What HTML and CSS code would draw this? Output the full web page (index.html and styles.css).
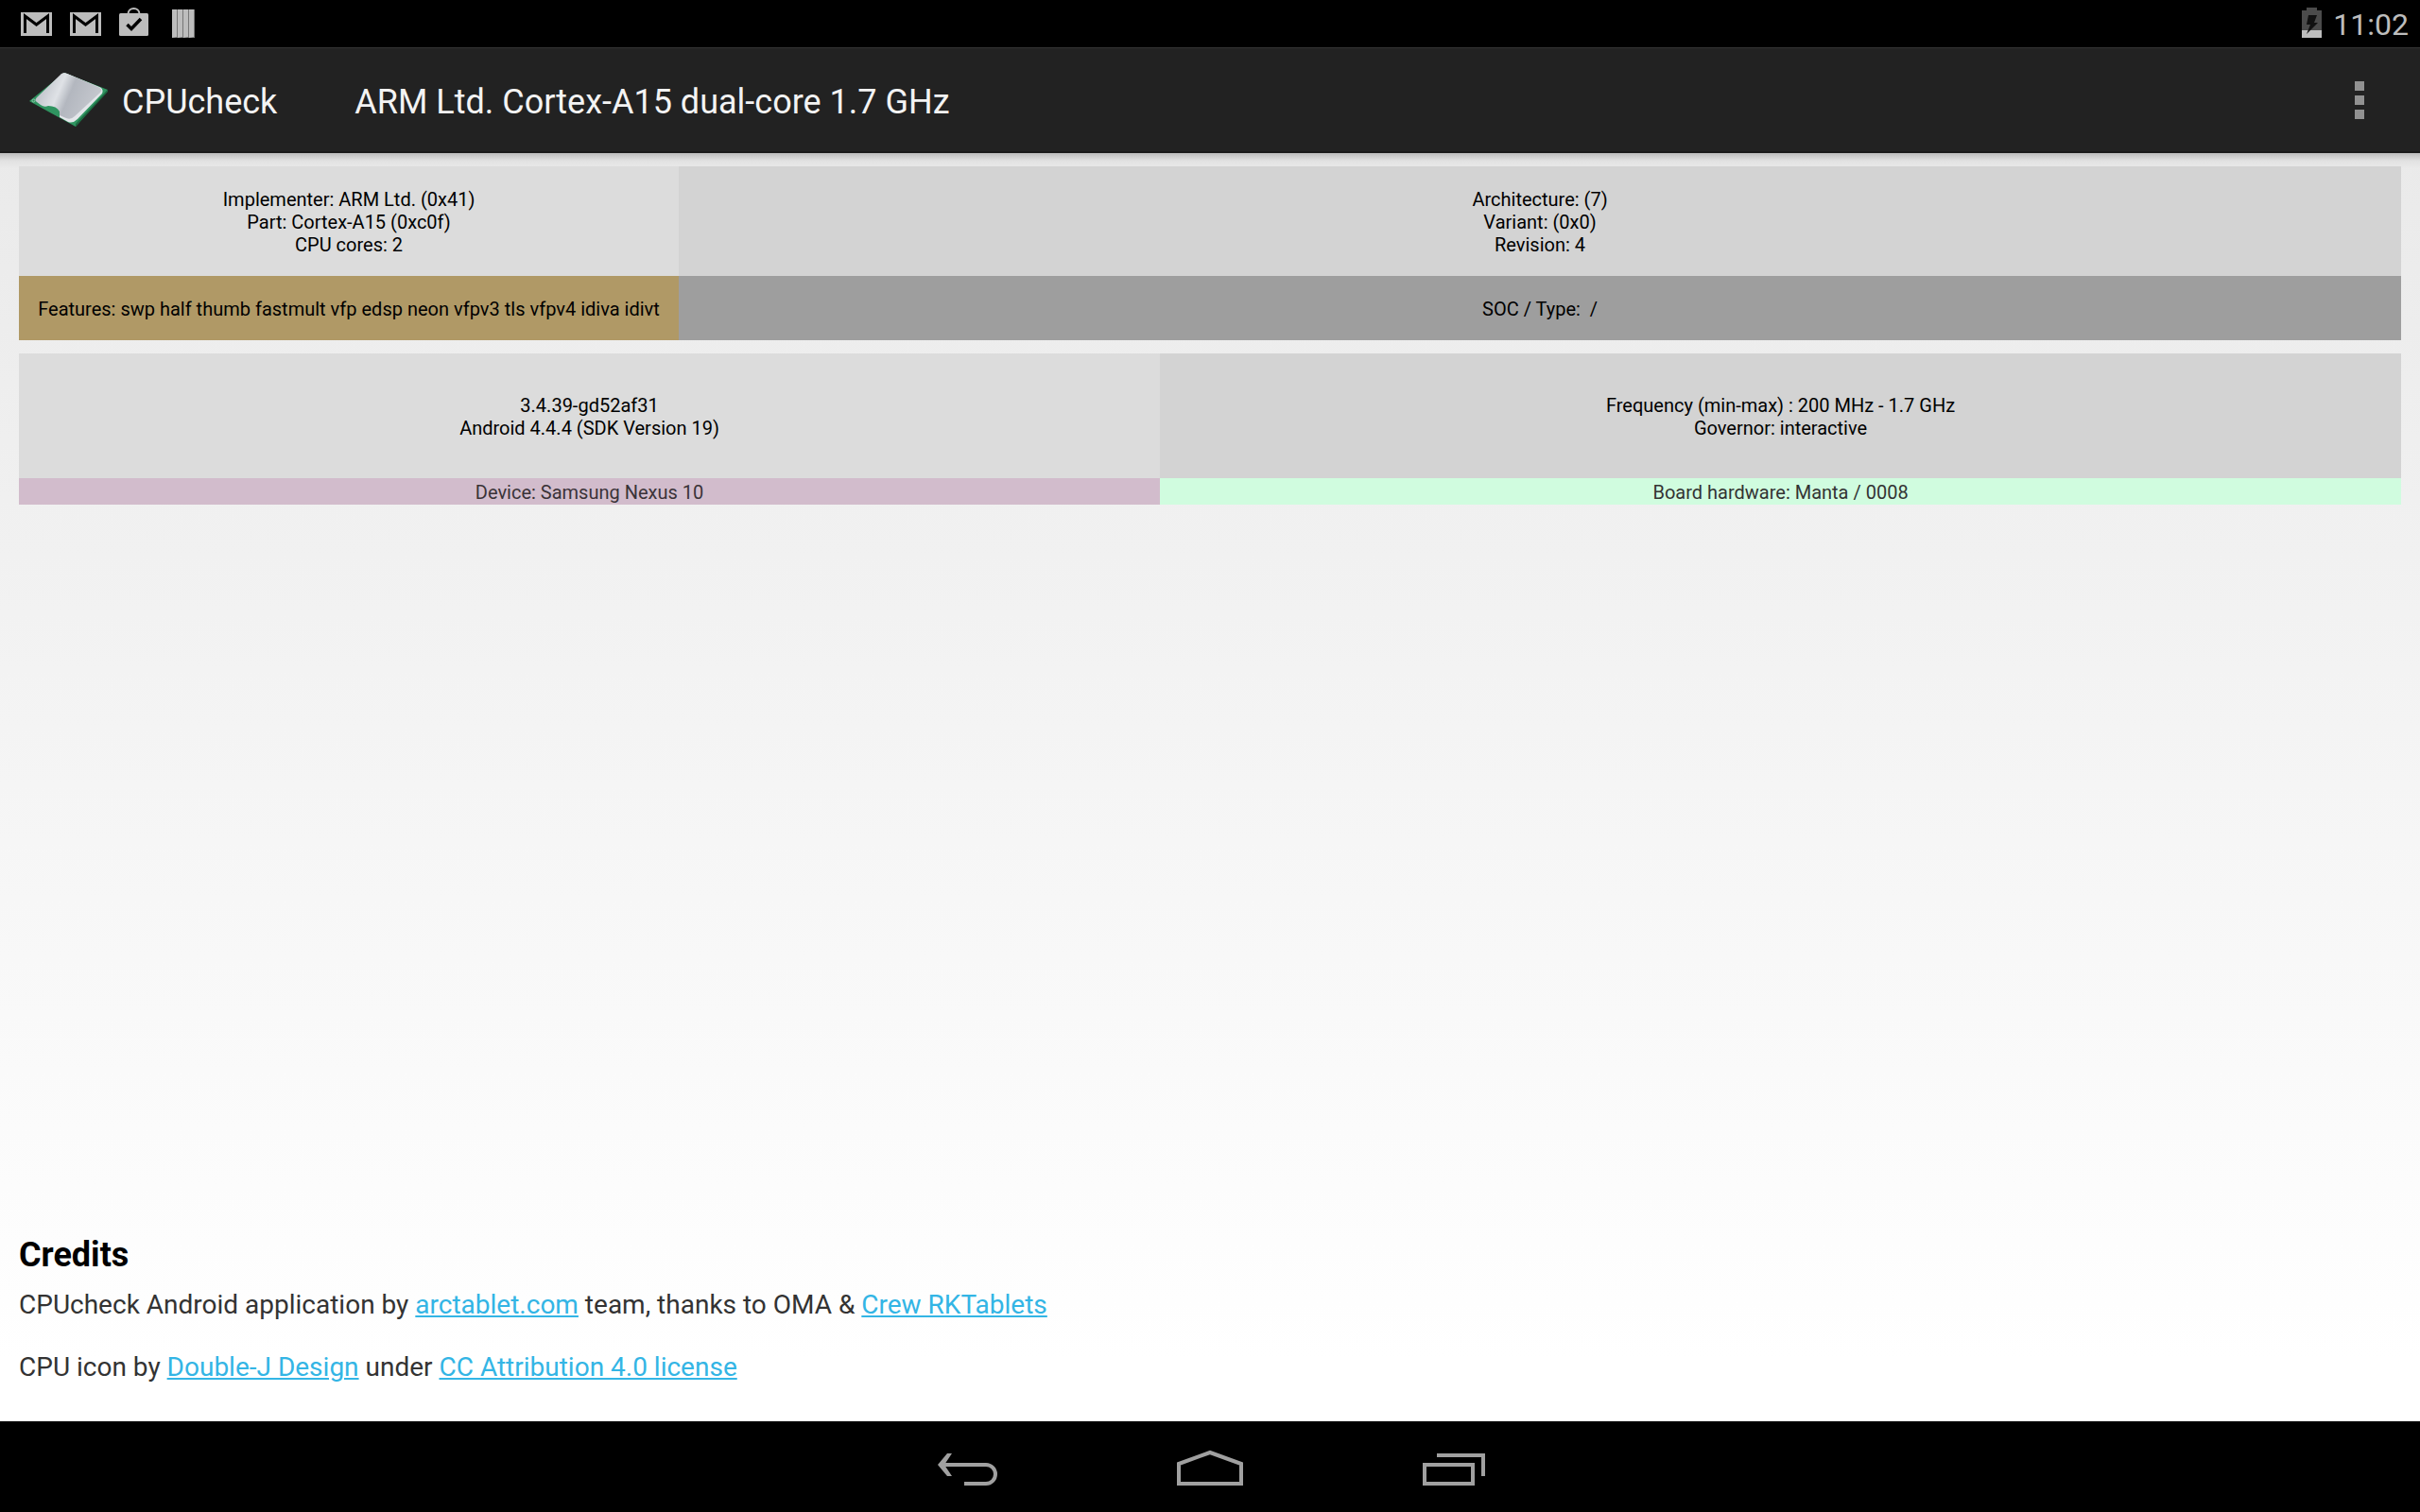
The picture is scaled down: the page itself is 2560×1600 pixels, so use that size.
FILE: index.html
```html
<!DOCTYPE html>
<html lang="en">
<head>
<meta charset="utf-8">
<meta name="viewport" content="width=device-width, initial-scale=1">
<title>CPUcheck</title>
<link rel="stylesheet" href="styles.css">
</head>
<body>
<div class="status-bar">
  <div class="notifications">
    <svg class="note" width="34" height="50" viewBox="0 0 34 50" role="img" aria-label="Gmail"><path fill="#bdbdbd" d="M0 13h33v25H0z"/><path fill="none" stroke="#000" stroke-width="3" d="M4.500 35V17l12 9 12-9v18"/></svg>
    <svg class="note" width="34" height="50" viewBox="0 0 34 50" role="img" aria-label="Gmail"><path fill="#bdbdbd" d="M0 13h33v25H0z"/><path fill="none" stroke="#000" stroke-width="3" d="M4.500 35V17l12 9 12-9v18"/></svg>
    <svg class="note" width="34" height="50" viewBox="0 0 34 50" role="img" aria-label="Play Store"><rect y="14" width="31" height="24" rx="1.500" fill="#bdbdbd"/><path fill="none" stroke="#bdbdbd" stroke-width="2" d="M9.500 15c0-8 12-8 12 0"/><path fill="none" stroke="#000" stroke-width="3.500" d="M8.500 26l4.500 4.500 10-10.500"/></svg>
    <svg class="note" width="34" height="50" viewBox="-4 0 34 50" role="img" aria-label="Books"><path fill="#777" d="M0 10h24v30H0z"/><path fill="#bdbdbd" d="M0 10h5v29l-5 1zM6 10h5v29l-5 1zM12 10h5v29l-5 1zM18 10h5v29l-5 1z"/></svg>
  </div>
  <div class="system">
    <svg width="21" height="50" viewBox="0 0 21 50" role="img" aria-label="Battery charging"><path fill="#4b4b4b" d="M0 11h5V8h11v3h5v21H0z"/><path fill="#bdbdbd" d="M0 32h21v8H0z"/><path fill="#111" d="M7 16h9l-3 8h4L5 36l4-10H5z"/></svg>
    <span class="clock">11:02</span>
  </div>
</div>

<header class="action-bar">
  <svg class="logo" width="84" height="58" viewBox="0 0 84 58" role="img" aria-label="CPU">
    <defs><linearGradient id="metal" x1="0" y1="0.200" x2="1" y2="0.500"><stop offset="0" stop-color="#b4b8c0"/><stop offset=".38" stop-color="#dfe2e6"/><stop offset=".55" stop-color="#b3b7bf"/><stop offset="1" stop-color="#c6c9cf"/></linearGradient></defs>
    <path fill="#2f9460" d="M37 0l46 18-34 39L0 30z"/>
    <path fill="#1d6b42" d="M83 18v2L49 57v-3z"/>
    <path fill="#e4e6ea" d="M33 2q3-3 7-1l34 14q5 2 3 7L51 49q-5 5-10 3l-9-5v-6z"/>
    <path fill="url(#metal)" d="M33 2q3-3 7-1l33 14q5 2 2 6L48 46q-4 4-9 2l-7-3v-4q-3-6-12-6-4 2-8-1l-4-3q-3-2 0-5z"/>
    <path fill="none" stroke="#8fc7a8" d="M3 29.500a1.500 1.500 0 1 0 3 0 1.500 1.500 0 1 0-3 0"/>
  </svg>
  <h1 class="app-name">CPUcheck</h1>
  <h2 class="cpu-name">ARM Ltd. Cortex-A15 dual-core 1.7 GHz</h2>
  <button class="overflow" type="button" aria-label="More options"><svg width="10" height="40" viewBox="0 0 10 40"><path fill="#919191" d="M0 0h10v10H0zM0 15h10v10H0zM0 30h10v10H0z"/></svg></button>
</header>

<main class="content">
  <table class="info cpu">
    <tr class="tall"><td class="light">Implementer: ARM Ltd. (0x41)<br>Part: Cortex-A15 (0xc0f)<br>CPU cores: 2</td><td class="mid">Architecture: (7)<br>Variant: (0x0)<br>Revision: 4</td></tr>
    <tr class="short"><td class="tan">Features: swp half thumb fastmult vfp edsp neon vfpv3 tls vfpv4 idiva idivt</td><td class="gray">SOC / Type:&nbsp; /</td></tr>
  </table>
  <table class="info device">
    <tr class="tall"><td class="light">3.4.39-gd52af31<br>Android 4.4.4 (SDK Version 19)</td><td class="mid">Frequency (min-max) : 200 MHz - 1.7 GHz<br>Governor: interactive</td></tr>
    <tr class="short"><td class="pink">Device: Samsung Nexus 10</td><td class="mint">Board hardware: Manta / 0008</td></tr>
  </table>
  <section class="credits">
    <h3>Credits</h3>
    <p>CPUcheck Android application by <a href="#arctablet">arctablet.com</a> team, thanks to OMA &amp; <a href="#rktablets">Crew RKTablets</a></p>
    <p>CPU icon by <a href="#double-j">Double-J Design</a> under <a href="#license">CC Attribution 4.0 license</a></p>
  </section>
</main>

<nav class="nav-bar">
  <button type="button" aria-label="Back"><svg width="72" height="40" viewBox="0 0 72 40"><path fill="none" stroke="#a0a0a0" stroke-width="4" d="M8 18h47a10 10 0 0 1 0 20H32"/><path fill="#a0a0a0" d="M14 6h5l-8 12 8 12h-5L4 18z"/></svg></button>
  <button type="button" aria-label="Home"><svg width="72" height="40" viewBox="0 0 72 40"><path fill="none" stroke="#a0a0a0" stroke-width="4" d="M3 38V17L36 5l33 12v21z"/></svg></button>
  <button type="button" aria-label="Recent apps"><svg width="72" height="40" viewBox="0 0 72 40"><path fill="none" stroke="#a0a0a0" stroke-width="4" d="M7 18h51v20H7zM20 8h49v22"/></svg></button>
</nav>
</body>
</html>
```
FILE: styles.css
```css
* {
  box-sizing: border-box;
}

body {
  margin: 0;
  min-height: 100vh;
  display: flex;
  flex-direction: column;
  font-family: Roboto, "Noto Sans", sans-serif;
  font-size: 28px;
  color: #333;
  background: #000;
}

svg {
  display: block;
}

button {
  border: 0;
  padding: 0;
  background: none;
  display: flex;
  align-items: center;
  justify-content: center;
}

.status-bar {
  height: 50px;
  padding: 0 12px 0 22px;
  display: flex;
  justify-content: space-between;
}

.notifications {
  display: flex;
  gap: 18px;
}

.system {
  display: flex;
  gap: 12px;
}

.clock {
  font-size: 32px;
  line-height: 52px;
  color: #bdbdbd;
}

.action-bar {
  height: 112px;
  padding: 0 4px 0 31px;
  display: flex;
  align-items: center;
  background: #222;
  border-top: 1px solid #333;
  border-bottom: 2px solid #1a1a1a;
}

.app-name,
.cpu-name {
  margin: 0;
  padding-top: 4px;
  font-size: 36px;
  line-height: 44px;
  font-weight: 400;
  color: #f3f3f3;
}

.app-name {
  margin-left: 14px;
}

.cpu-name {
  margin-left: 82px;
}

.overflow {
  width: 120px;
  height: 100%;
  margin-left: auto;
}

.content {
  flex: 1;
  padding: 14px 20px 40px;
  display: flex;
  flex-direction: column;
  gap: 14px;
  background:
    linear-gradient(rgba(0, 0, 0, 0.2), rgba(0, 0, 0, 0.04) 8px, rgba(0, 0, 0, 0) 16px),
    linear-gradient(#eaeaea, #fff 95%);
}

.info {
  width: 100%;
  table-layout: fixed;
  border-collapse: collapse;
  font-size: 20px;
  line-height: 24px;
  text-align: center;
  color: #000;
}

.info td {
  padding: 2px 0 0;
}

.cpu td:first-child {
  width: 27.700%;
}

.device td:first-child {
  width: 47.900%;
}

.cpu .tall {
  height: 116px;
}

.cpu .short {
  height: 68px;
}

.device .tall {
  height: 132px;
}

.device .short {
  height: 28px;
}

.light {
  background: #dcdcdc;
}

.mid {
  background: #d3d3d3;
}

.tan {
  background: #b09966;
}

.gray {
  background: #9e9e9e;
}

.pink {
  background: #d2bccc;
  color: #3a3338;
}

.mint {
  background: #d0fcdf;
  color: #333;
}

.credits {
  margin-top: auto;
}

.credits h3 {
  margin: 0 0 14px;
  font-size: 36px;
  line-height: 44px;
  color: #000;
}

.credits p {
  margin: 0;
  line-height: 34px;
}

.credits p + p {
  margin-top: 32px;
}

.credits a {
  color: #33b5e5;
}

.nav-bar {
  height: 96px;
  display: flex;
  justify-content: center;
}

.nav-bar button {
  width: 256px;
}
```
